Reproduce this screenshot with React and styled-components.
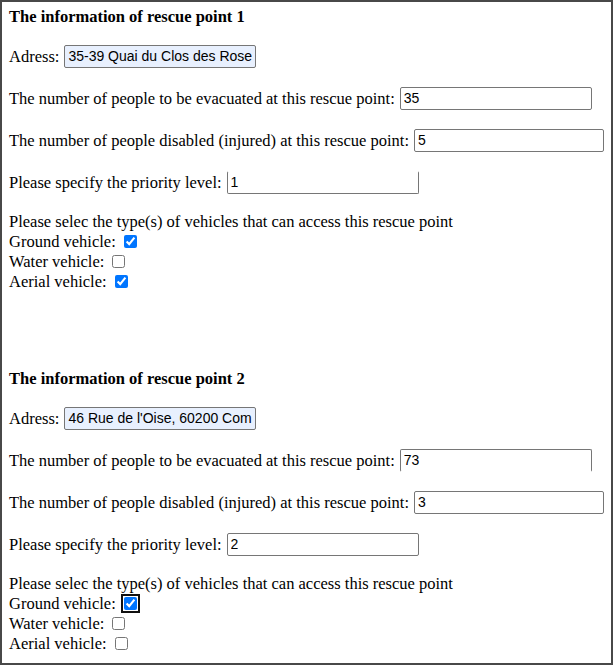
import React from "react";
import styled, { createGlobalStyle } from "styled-components";

const GlobalStyle = createGlobalStyle`
  html, body {
    margin: 0;
    padding: 0;
    background: #ffffff;
  }
  body {
    font-family: "Liberation Serif", "Times New Roman", serif;
    font-size: 16.5px;
    color: #000000;
  }
`;

const points = [
  {
    id: 1,
    address: "35-39 Quai du Clos des Roses, 60200 Compiègne",
    evacuated: "35",
    disabled: "5",
    priority: "1",
    vehicles: { ground: true, water: false, aerial: true },
    openEdges: { priority: "top" },
  },
  {
    id: 2,
    address: "46 Rue de l'Oise, 60200 Compiègne",
    evacuated: "73",
    disabled: "3",
    priority: "2",
    vehicles: { ground: true, water: false, aerial: false },
    openEdges: { evacuated: "bottom" },
    focused: "ground",
  },
];

const Frame = styled.div`
  box-sizing: border-box;
  width: 613px;
  height: 665px;
  border: 2px solid #484848;
  padding: 5px 7px 0 7px;
  display: flex;
  flex-direction: column;
  gap: 77px;
  overflow: hidden;
`;

const Section = styled.section`
  display: flex;
  flex-direction: column;
  gap: 18px;
`;

const Heading = styled.h4`
  margin: 0;
  font-size: 16.5px;
  font-weight: bold;
  line-height: 19px;
`;

const Row = styled.label`
  display: flex;
  align-items: center;
  gap: 5px;
  height: 24px;
  line-height: 19px;
  white-space: nowrap;
`;

const TextField = styled.input`
  box-sizing: border-box;
  width: 192px;
  height: 23px;
  margin: 0;
  padding: 1px 3px;
  border: 1px solid #767676;
  border-radius: 2px;
  font-family: "Liberation Sans", Arial, sans-serif;
  font-size: 14px;
  color: #000000;
  background: ${(p) => (p.$autofilled ? "#e8f0fe" : "#ffffff")};
  ${(p) => (p.$open === "top" ? "border-top-color: #ffffff;" : "")}
  ${(p) => (p.$open === "bottom" ? "border-bottom-color: #ffffff;" : "")}
  outline: none;
`;

const Vehicles = styled.div`
  display: flex;
  flex-direction: column;
  line-height: 20px;
`;

const Line = styled.div`
  height: 20px;
  white-space: nowrap;
`;

const Check = styled.input`
  margin: 0 3px 0 4px;
  width: 13px;
  height: 13px;
  vertical-align: -1px;
  ${(p) =>
    p.$focused
      ? `outline: 2px solid #101010; outline-offset: 1px; border-radius: 2px;`
      : ""}
`;

const vehicleTypes = [
  { key: "ground", label: "Ground vehicle:" },
  { key: "water", label: "Water vehicle:" },
  { key: "aerial", label: "Aerial vehicle:" },
];

const RescuePoint = ({ point }) => (
  <Section>
    <Heading>The information of rescue point {point.id}</Heading>
    <Row>
      Adress:
      <TextField defaultValue={point.address} $autofilled />
    </Row>
    <Row>
      The number of people to be evacuated at this rescue point:
      <TextField
        defaultValue={point.evacuated}
        $open={point.openEdges.evacuated}
      />
    </Row>
    <Row>
      The number of people disabled (injured) at this rescue point:
      <TextField defaultValue={point.disabled} />
    </Row>
    <Row>
      Please specify the priority level:
      <TextField
        defaultValue={point.priority}
        $open={point.openEdges.priority}
      />
    </Row>
    <Vehicles>
      <Line>Please selec the type(s) of vehicles that can access this rescue point</Line>
      {vehicleTypes.map((v) => (
        <Line key={v.key}>
          {v.label}{" "}
          <Check
            type="checkbox"
            defaultChecked={point.vehicles[v.key]}
            $focused={point.focused === v.key}
          />
        </Line>
      ))}
    </Vehicles>
  </Section>
);

const App = () => (
  <>
    <GlobalStyle />
    <Frame>
      {points.map((p) => (
        <RescuePoint key={p.id} point={p} />
      ))}
    </Frame>
  </>
);

export default App;
